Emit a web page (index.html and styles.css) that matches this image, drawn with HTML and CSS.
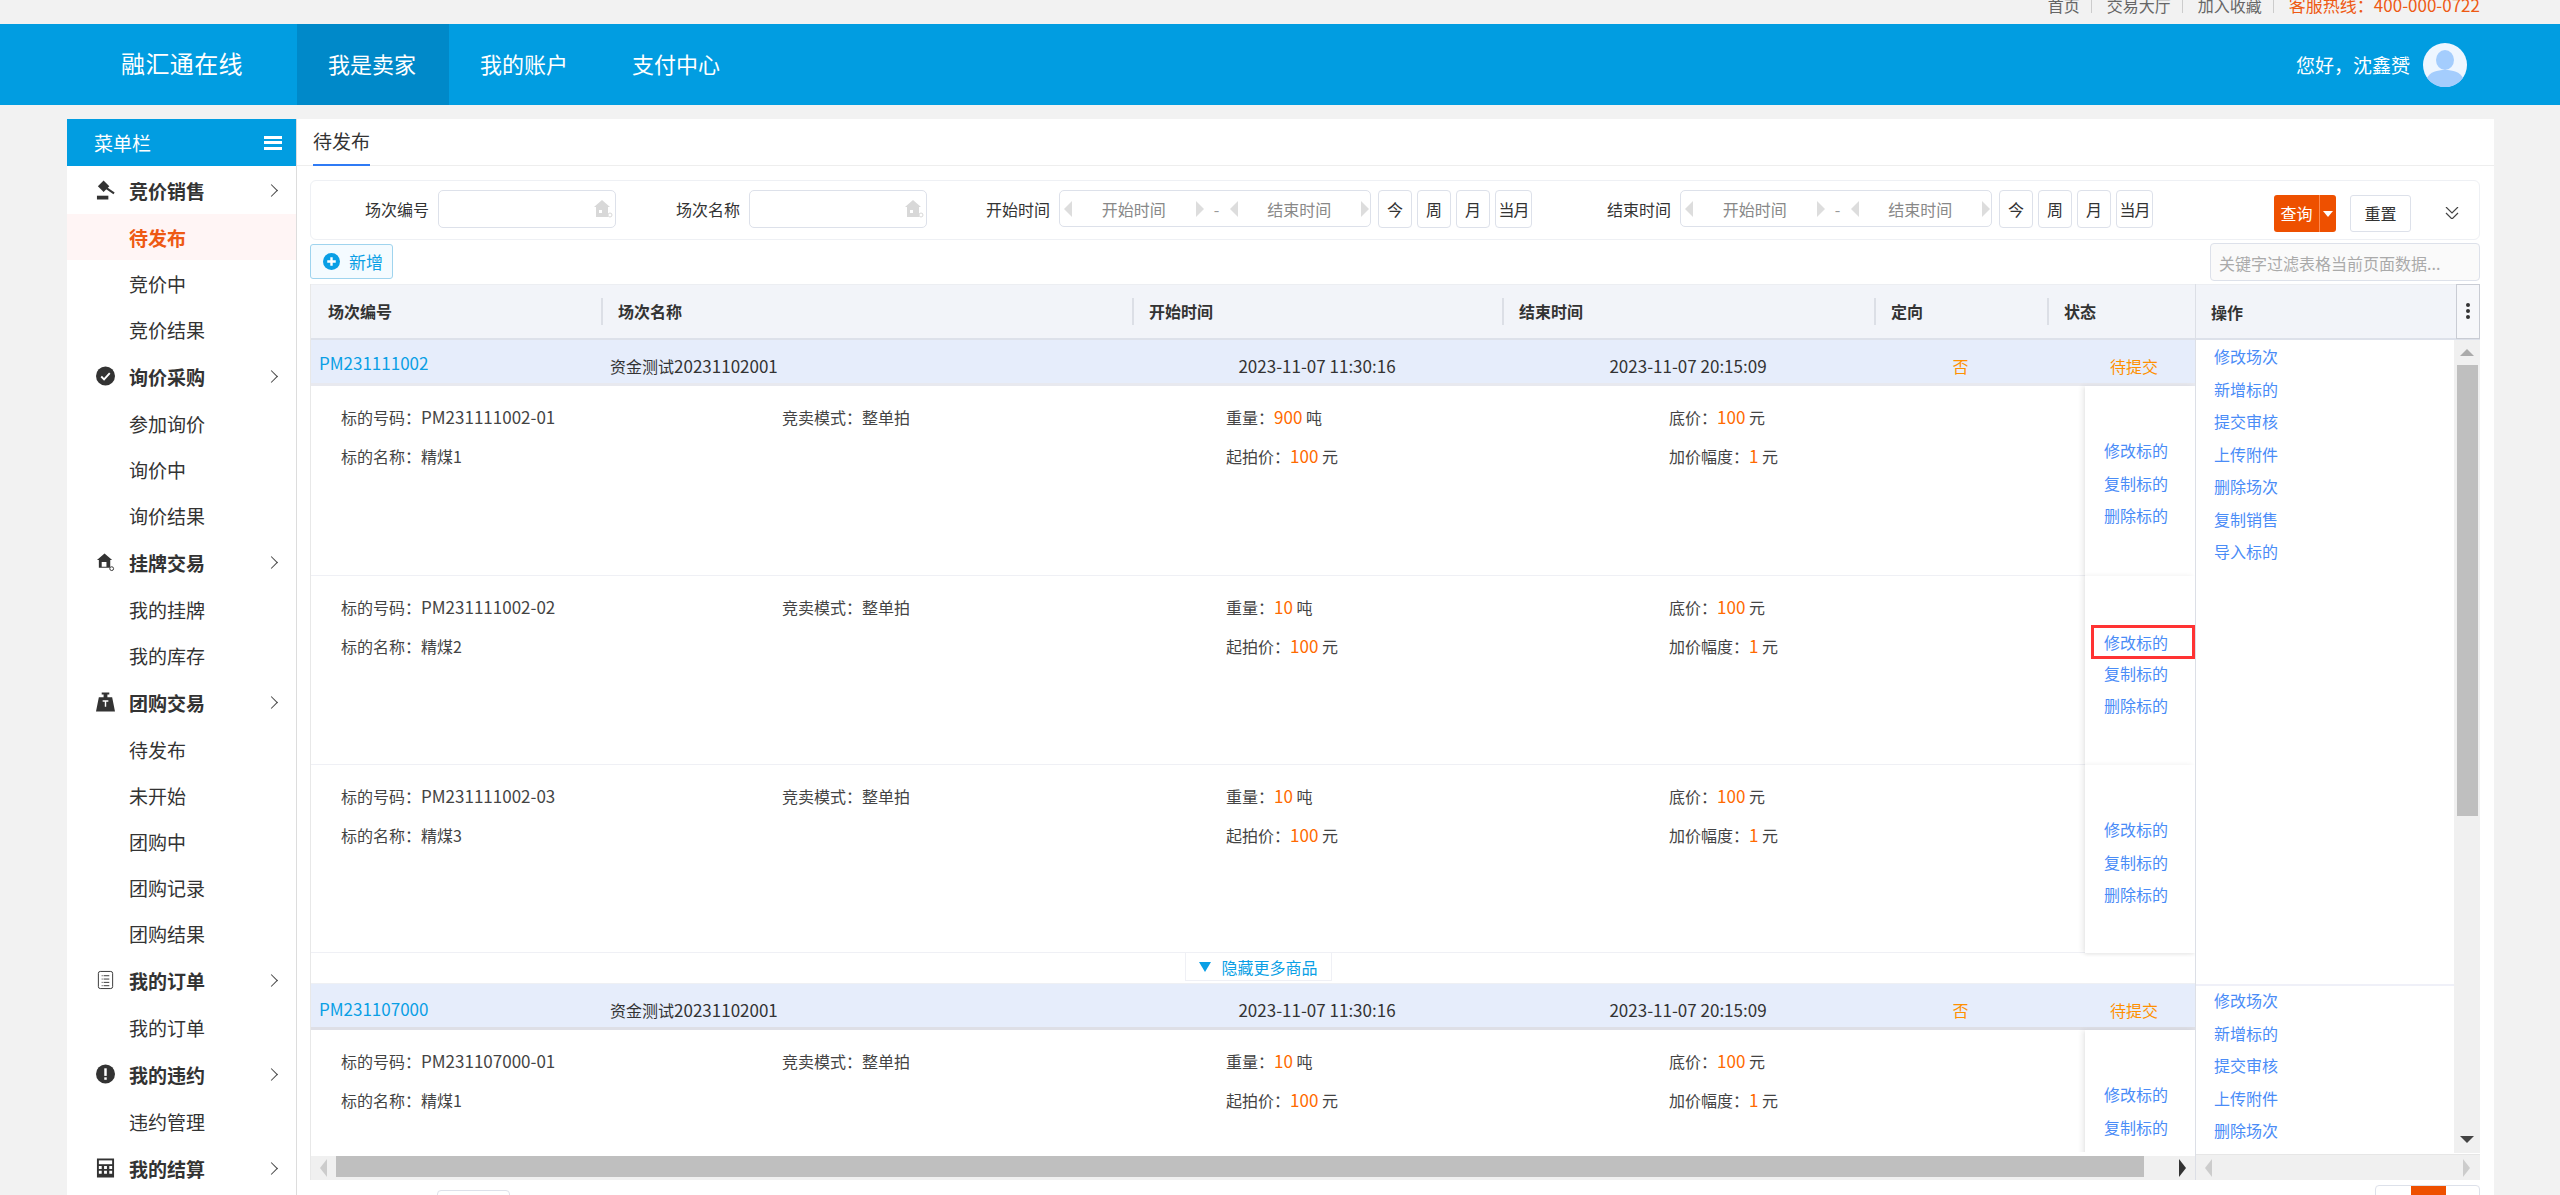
FILE: index.html
```html
<!DOCTYPE html>
<html lang="zh-CN">
<head>
    <meta charset="UTF-8">
    <title>融汇通在线</title>
    <link rel="stylesheet" href="styles.css">
</head>
<body>
    <div class="topbar">
        <a>首页</a><i class="sep"></i>
        <a>交易大厅</a><i class="sep"></i>
        <a>加入收藏</a><i class="sep"></i>
        <a class="hotline">客服热线：400-000-0722</a>
    </div>

    <div class="header">
        <div class="brand">融汇通在线</div>
        <a class="nav-item active">我是卖家</a>
        <a class="nav-item">我的账户</a>
        <a class="nav-item">支付中心</a>
        <div class="user">
            <span>您好，沈鑫赟</span>
            <svg class="avatar" viewBox="0 0 44 44"><circle cx="22" cy="22" r="22" fill="#eef6ff"/><ellipse cx="22" cy="17" rx="9" ry="10" fill="#a4cdfd"/><path d="M4 35c3-6 10-8 18-8s15 2 18 8a22 22 0 0 1-36 0z" fill="#a4cdfd"/></svg>
        </div>
    </div>

    <div class="layout">
        <div class="sidebar">
            <div class="side-title"><span>菜单栏</span><i class="burger"></i></div>

            <a class="menu-head"><svg viewBox="0 0 20 20"><path d="M8 0l6 6-6 6-6-6z" fill="#333"/><path d="M11 8l8 5.500" stroke="#333" stroke-width="2.200"/><rect x="1" y="16" width="12" height="4" fill="#333"/></svg><b>竞价销售</b><i class="arrow"></i></a>
            <a class="menu-item current">待发布</a>
            <a class="menu-item">竞价中</a>
            <a class="menu-item">竞价结果</a>

            <a class="menu-head"><svg viewBox="0 0 20 20"><circle cx="10" cy="10" r="10" fill="#333"/><path d="M5.500 10.500l3 3 6-6.500" fill="none" stroke="#fff" stroke-width="2"/></svg><b>询价采购</b><i class="arrow"></i></a>
            <a class="menu-item">参加询价</a>
            <a class="menu-item">询价中</a>
            <a class="menu-item">询价结果</a>

            <a class="menu-head"><svg viewBox="0 0 20 20"><path d="M9 1l8 7h-2v8H3V8H1z" fill="#333"/><rect x="6" y="10" width="5" height="5" fill="#fff"/><circle cx="16.500" cy="17" r="2" fill="#fff" stroke="#333"/></svg><b>挂牌交易</b><i class="arrow"></i></a>
            <a class="menu-item">我的挂牌</a>
            <a class="menu-item">我的库存</a>

            <a class="menu-head"><svg viewBox="0 0 20 20"><path d="M6 0h8v2h-2v3h5l3 15H0L3 5h5V2H6z" fill="#333"/><path d="M7 9h6M10 9v6" stroke="#fff" stroke-width="1.500"/></svg><b>团购交易</b><i class="arrow"></i></a>
            <a class="menu-item">待发布</a>
            <a class="menu-item">未开始</a>
            <a class="menu-item">团购中</a>
            <a class="menu-item">团购记录</a>
            <a class="menu-item">团购结果</a>

            <a class="menu-head"><svg viewBox="0 0 20 20"><rect x="2.500" y="1" width="15" height="18" rx="2" fill="none" stroke="#333"/><path d="M6 5.500h8M6 9h8M6 12.500h8M6 16h8" stroke="#333" stroke-dasharray="1 1 7"/></svg><b>我的订单</b><i class="arrow"></i></a>
            <a class="menu-item">我的订单</a>

            <a class="menu-head"><svg viewBox="0 0 20 20"><circle cx="10" cy="10" r="10" fill="#333"/><rect x="8.700" y="4" width="2.600" height="8" fill="#fff"/><rect x="8.700" y="13.500" width="2.600" height="2.600" fill="#fff"/></svg><b>我的违约</b><i class="arrow"></i></a>
            <a class="menu-item">违约管理</a>

            <a class="menu-head"><svg viewBox="0 0 20 20"><rect x="1" y="0" width="18" height="20" fill="#333"/><rect x="3" y="2" width="14" height="4" fill="#fff"/><path d="M3 8h3v3H3zM8.500 8h3v3h-3zM14 8h3v3h-3zM3 13h3v3H3zM8.500 13h3v3h-3zM14 13h3v3h-3z" fill="#fff"/></svg><b>我的结算</b><i class="arrow"></i></a>
        </div>

        <div class="content">
            <div class="tabs"><span class="tab">待发布</span></div>

            <div class="filter">
                <label class="f-label l-first">场次编号</label>
                <div class="f-input"><svg class="f-icon" viewBox="0 0 20 18"><path d="M9 0l8 7h-2v10H3V7H1z" fill="#d8d8d8"/><rect x="6" y="10" width="3" height="3" fill="#fff"/><circle cx="17" cy="15" r="2" fill="#fff" stroke="#d8d8d8"/></svg></div>
                <label class="f-label l-second">场次名称</label>
                <div class="f-input"><svg class="f-icon" viewBox="0 0 20 18"><path d="M9 0l8 7h-2v10H3V7H1z" fill="#d8d8d8"/><rect x="6" y="10" width="3" height="3" fill="#fff"/><circle cx="17" cy="15" r="2" fill="#fff" stroke="#d8d8d8"/></svg></div>

                <label class="f-label l-third">开始时间</label>
                <div class="f-range">
                    <i class="tri left"></i><span>开始时间</span><i class="tri right"></i><em>-</em>
                    <i class="tri left"></i><span>结束时间</span><i class="tri right"></i>
                </div>
                <a class="f-btn b-first">今</a><a class="f-btn">周</a><a class="f-btn">月</a><a class="f-btn wide">当月</a>

                <label class="f-label l-fourth">结束时间</label>
                <div class="f-range">
                    <i class="tri left"></i><span>开始时间</span><i class="tri right"></i><em>-</em>
                    <i class="tri left"></i><span>结束时间</span><i class="tri right"></i>
                </div>
                <a class="f-btn b-first">今</a><a class="f-btn">周</a><a class="f-btn">月</a><a class="f-btn wide">当月</a>

                <a class="query"><span>查询</span><i class="query-drop"></i></a>
                <a class="reset">重置</a>
                <svg class="collapse" viewBox="0 0 14 12"><path d="M1 0l6 6 6-6M1 6l6 6 6-6" fill="none" stroke="#444" stroke-width="1.200"/></svg>
            </div>

            <div class="toolbar">
                <a class="add"><svg viewBox="0 0 18 18"><circle cx="9" cy="9" r="9" fill="#0a9fe5"/><path d="M9 4.500v9M4.500 9h9" stroke="#fff" stroke-width="2.500"/></svg>新增</a>
                <div class="keyword">关键字过滤表格当前页面数据...</div>
            </div>

            <div class="grid">
                <div class="grid-main">
                    <div class="thead">
                        <div><span>场次编号</span></div>
                        <div><span>场次名称</span></div>
                        <div><span>开始时间</span></div>
                        <div><span>结束时间</span></div>
                        <div><span>定向</span></div>
                        <div><span>状态</span></div>
                    </div>
                    <div class="tbody" id="tbody"></div>
                    <div class="hbar"><i class="tri left"></i><div class="hthumb"></div><i class="tri right dark"></i></div>
                </div>
                <div class="grid-ops">
                    <div class="ops-head"><span>操作</span><a class="col-menu"><i></i><i></i><i></i></a></div>
                    <div class="ops-body">
                        <div class="ops-list">
                            <div class="ops-group first" id="ops-one"></div>
                            <div class="ops-group" id="ops-two"></div>
                        </div>
                        <div class="vbar"><i class="tri up"></i><div class="vthumb"></div><i class="tri down"></i></div>
                    </div>
                    <div class="ops-bar"><i class="tri left"></i><i class="tri right"></i></div>
                </div>
            </div>

            <div class="pager-row">
                <div class="page-size"></div>
                <div class="pager"><a></a><a class="on"></a><a></a></div>
            </div>
        </div>
    </div>

    <script src="app.js"></script>
</body>
</html>
```

FILE: styles.css
```css
* {
    box-sizing: border-box;
}
html, body {
    margin: 0;
    height: 1195px;
    overflow: hidden;
}
body {
    font-family: "Noto Sans CJK SC", "Liberation Sans", sans-serif;
    font-size: 16px;
    color: #333;
    background: #f2f2f2;
}
i, em {
    font-style: normal;
}
.en {
    font-size: 17px;
}

/* top links */
.topbar {
    height: 24px;
    padding-right: 80px;
    overflow: hidden;
    display: flex;
    justify-content: flex-end;
    align-items: flex-start;
    color: #666;
}
.topbar a {
    margin-top: -5px;
    line-height: 20px;
}
.topbar .sep {
    width: 1px;
    height: 13px;
    margin: 0 15px 0 11px;
    background: #ccc;
}
.hotline {
    color: #ee5a14;
    font-size: 17px;
}

/* header */
.header {
    height: 81px;
    display: flex;
    align-items: stretch;
    background: #019de1;
    color: #fff;
    padding-right: 93px;
}
.brand {
    width: 297px;
    padding-left: 121px;
    font-size: 24px;
    letter-spacing: 0.400px;
    line-height: 78px;
}
.nav-item {
    width: 152px;
    padding-right: 2px;
    text-align: center;
    font-size: 22px;
    line-height: 78px;
}
.nav-item.active {
    background: #0089c9;
}
.user {
    margin-left: auto;
    display: flex;
    align-items: center;
    font-size: 19px;
    gap: 13px;
}
.avatar {
    width: 44px;
    height: 44px;
}

/* page body */
.layout {
    display: flex;
    margin: 14px 66px 0 67px;
}
.sidebar {
    width: 230px;
    height: 1076px;
    background: #fff;
    border-right: 1px solid #ddd;
    overflow: hidden;
}
.side-title {
    height: 47px;
    background: #019de1;
    color: #fff;
    font-size: 19px;
    padding: 0 14px 0 27px;
    display: flex;
    align-items: center;
    justify-content: space-between;
}
.burger {
    width: 18px;
    height: 14px;
    border-top: 3px solid #fff;
    border-bottom: 3px solid #fff;
}
.burger::after {
    content: "";
    display: block;
    height: 3px;
    margin-top: 2.500px;
    background: #fff;
}
.menu-head {
    height: 48px;
    display: flex;
    align-items: center;
    padding-left: 29px;
    font-size: 19px;
}
.menu-head svg {
    width: 19px;
    height: 20px;
    margin-right: 14px;
}
.menu-head b {
    flex: 1;
}
.arrow {
    width: 9px;
    height: 9px;
    margin-right: 20px;
    border-top: 1px solid #444;
    border-right: 1px solid #444;
    transform: rotate(45deg);
}
.menu-item {
    display: block;
    height: 46px;
    padding-left: 62px;
    line-height: 48px;
    font-size: 19px;
}
.menu-item.current {
    background: #fff5f5;
    color: #ee5a14;
    font-weight: bold;
}

.content {
    flex: 1;
    background: #fff;
    height: 1076px;
    overflow: hidden;
}
.tabs {
    height: 47px;
    padding-left: 16px;
    border-bottom: 1px solid #eee;
}
.tab {
    display: inline-block;
    height: 47px;
    line-height: 44px;
    font-size: 19px;
    border-bottom: 2px solid #2f7bf5;
}

/* search form */
.filter {
    margin: 14px 14px 0 13px;
    height: 60px;
    border: 1px solid #eef0f4;
    border-radius: 6px;
    display: flex;
    align-items: flex-start;
    padding-top: 9px;
}
.f-label {
    line-height: 38px;
    white-space: nowrap;
    margin-right: 9px;
}
.l-first { margin-left: 54px; }
.l-second { margin-left: 60px; }
.l-third { margin-left: 59px; }
.l-fourth { margin-left: 75px; }
.f-input {
    width: 178px;
    height: 38px;
    border: 1px solid #dde1ea;
    border-radius: 5px;
    display: flex;
    align-items: center;
    justify-content: flex-end;
    padding-right: 2px;
}
.f-icon {
    width: 20px;
    height: 18px;
}
.f-range {
    width: 312px;
    height: 37px;
    border: 1px solid #dde1ea;
    border-radius: 5px;
    display: flex;
    align-items: center;
    padding: 0 1px 0 4px;
    color: #888;
}
.f-range span {
    flex: 1;
    text-align: center;
}
.f-range em {
    width: 26px;
    text-align: center;
    color: #999;
}
.f-btn {
    width: 34px;
    height: 38px;
    line-height: 36px;
    margin-left: 5px;
    text-align: center;
    border: 1px solid #dde1ea;
    border-radius: 4px;
}
.f-btn.b-first {
    margin-left: 7px;
}
.f-btn.wide {
    width: 37px;
    white-space: nowrap;
    font-size: 16px;
    letter-spacing: -1px;
}
.query {
    margin: 5px 0 0 auto;
    width: 62px;
    height: 37px;
    background: #ee5000;
    border-radius: 3px;
    color: #fff;
    display: flex;
    align-items: center;
}
.query span {
    width: 46px;
    text-align: center;
    border-right: 1px solid #ff8a50;
    line-height: 37px;
}
.query-drop {
    margin-left: 3px;
    border: 5px solid transparent;
    border-top: 6px solid #fff;
    border-bottom: 0;
}
.reset {
    margin: 5px 0 0 14px;
    width: 61px;
    height: 37px;
    line-height: 35px;
    text-align: center;
    border: 1px solid #dde1ea;
    border-radius: 3px;
}
.collapse {
    width: 14px;
    height: 12px;
    margin: 17px 20px 0 34px;
}
.toolbar {
    margin: 4px 14px 0 13px;
    height: 40px;
    display: flex;
    align-items: flex-start;
    justify-content: space-between;
}
.add {
    width: 83px;
    height: 35px;
    border: 1px solid #9fd4ee;
    border-radius: 3px;
    background: #f4fbff;
    color: #0a9fe5;
    font-size: 17px;
    display: flex;
    align-items: center;
    padding-left: 12px;
    gap: 9px;
}
.add svg {
    width: 17px;
    height: 17px;
}
.keyword {
    width: 270px;
    height: 38px;
    margin-top: -1px;
    border: 1px solid #dde1ea;
    border-radius: 4px;
    background: #fafafa;
    color: #aaa;
    line-height: 38px;
    padding-left: 8px;
    font-size: 16px;
}

/* table */
.grid {
    margin: 0 14px 0 13px;
    height: 896px;
    display: flex;
    background: #f0f0f0;
}
.grid-main {
    width: 1885px;
    height: 896px;
    overflow: hidden;
    border-left: 1px solid #e8e8e8;
    background: #fff;
}
.thead {
    height: 56px;
    background: #f2f4f9;
    border-bottom: 2px solid #dde1ea;
    border-top: 1px solid #eceef2;
    margin-left: -1px;
    display: grid;
    grid-template-columns: 291px 531px 370px 372px 173px 148px;
    align-items: center;
    font-weight: bold;
}
.thead div {
    border-left: 2px solid #dcdfe6;
    height: 27px;
    line-height: 27px;
    padding-left: 15px;
}
.thead div:first-child {
    border-left: 0;
    padding-left: 18px;
}
.tbody {
    height: 812px;
    margin-bottom: 2px;
    overflow: hidden;
}
.row-main {
    height: 46px;
    margin-left: -1px;
    background: #e6edfb;
    border-bottom: 3px solid #e8e9ef;
    display: grid;
    grid-template-columns: 291px 531px 370px 372px 173px 148px;
    line-height: 52px;
}
.row-main.later {
    height: 47px;
    border-top: 1px solid #eef0f4;
    border-bottom-color: #dedfe6;
    line-height: 52px;
}
.row-main .code {
    padding-left: 9px;
    color: #0a9fe5;
    font-size: 17px;
    line-height: 46px;
}
.row-main.later .code {
    line-height: 50px;
}
.row-main .name {
    padding-left: 9px;
}
.row-main .mid {
    text-align: center;
    font-size: 17px;
}
.row-main .flag,
.row-main .state {
    color: #ff9000;
}
.row-main .flag {
    text-align: center;
}
.row-main .state {
    padding-left: 63px;
    white-space: nowrap;
}
.row-sub {
    height: 189px;
    border-bottom: 1px solid #eff0f5;
    display: grid;
    grid-template-columns: 441px 444px 443px 415px 111px;
    padding-left: 30px;
}
.row-main + .row-sub {
    height: 190px;
}
.row-sub:nth-child(4) {
    height: 188px;
}
.row-sub .cell {
    padding-top: 20px;
    line-height: 22px;
    color: #444;
}
.row-sub .cell:first-child {
    margin-right: -1px;
}
.row-sub .cell p {
    margin: 0 0 17px;
    white-space: nowrap;
}
.num {
    color: #ff6a00;
    font-size: 17px;
}
.sub-ops {
    margin-left: 1px;
    margin-bottom: -1px;
    padding: 48px 0 0 19px;
    box-shadow: -3px 0 5px rgba(0, 0, 0, 0.07), 0 2px 3px rgba(0, 0, 0, 0.05);
    background: #fff;
    position: relative;
}
.sub-ops a {
    display: block;
    color: #4a8cf7;
    line-height: 32.500px;
    white-space: nowrap;
}
.sub-ops .picked {
    height: 34px;
    line-height: 34px;
    margin: 1px 0 -2.500px -13px;
    padding-left: 13px;
    outline: 3px solid #ff3333;
    outline-offset: -3px;
}
.more {
    height: 30px;
    display: flex;
    justify-content: center;
    padding-left: 11px;
}
.more a {
    width: 147px;
    height: 28px;
    border: 1px solid #eff0f5;
    border-top: 0;
    color: #0a9fe5;
    display: flex;
    align-items: center;
    justify-content: center;
    gap: 10px;
}
.more i {
    border: 6px solid transparent;
    border-top: 10px solid #0a9fe5;
    border-bottom: 0;
}

.hbar {
    height: 26px;
    border-top: 2px solid #fff;
    background: #f0f0f0;
    margin-left: -1px;
    display: flex;
    align-items: flex-start;
    padding-left: 10px;
}
.hbar .tri {
    align-self: center;
}
.hthumb {
    width: 1808px;
    height: 21px;
    margin-left: 9px;
    background: #bfbfbf;
}
.hbar .right {
    margin-left: 35px;
}

/* fixed right column */
.grid-ops {
    width: 285px;
    display: flex;
    flex-direction: column;
    border-left: 1px solid #dcdfe6;
    background: #fff;
}
.ops-head {
    height: 56px;
    background: #f2f4f9;
    border-top: 1px solid #eceef2;
    border-bottom: 2px solid #dde1ea;
    display: flex;
    align-items: center;
    padding-left: 15px;
    font-weight: bold;
}
.ops-head span {
    flex: 1;
}
.col-menu {
    width: 24px;
    height: 55px;
    margin-top: -1px;
    border: 1px solid #c9ccd4;
    display: flex;
    flex-direction: column;
    align-items: center;
    justify-content: center;
    gap: 2px;
    background: #f6f7fa;
}
.col-menu i {
    width: 4px;
    height: 4px;
    background: #333;
    border-radius: 50%;
}
.ops-body {
    flex: 1;
    display: flex;
    min-height: 0;
}
.ops-list {
    flex: 1;
    overflow: hidden;
}
.ops-group {
    padding-left: 18px;
    color: #4a8cf7;
    border-top: 2px solid #eff0f8;
}
.ops-group.first {
    height: 644px;
    border-top: 0;
}
.ops-group a {
    display: block;
    line-height: 32.500px;
}
.ops-group:not(.first) a:first-child {
    margin-top: -2px;
}
.vbar {
    width: 26px;
    background: #f0f0f0;
    padding: 9px 3px 0;
    display: flex;
    flex-direction: column;
    align-items: center;
    height: 813px;
}
.vthumb {
    width: 21px;
    height: 451px;
    margin-top: 9px;
    background: #bfbfbf;
    flex-shrink: 0;
}
.vbar .down {
    margin-top: auto;
    margin-bottom: 10px;
}
.ops-bar {
    height: 26px;
    background: #f0f0f0;
    border-top: 1px solid #e6e6e6;
    display: flex;
    align-items: center;
    justify-content: space-between;
    padding: 0 10px 0 9px;
}

/* little scrollbar and picker triangles */
.tri {
    display: block;
    width: 0;
    height: 0;
    border: 6px solid transparent;
    flex-shrink: 0;
}
.tri.left {
    border-left: 0;
    border-right: 7px solid #ccc;
    border-top-width: 9px;
    border-bottom-width: 9px;
}
.tri.right {
    border-right: 0;
    border-left: 7px solid #ccc;
    border-top-width: 9px;
    border-bottom-width: 9px;
}
.tri.right.dark {
    border-left-color: #333;
}
.tri.up {
    border-top: 0;
    border-bottom: 7px solid #aaa;
    border-left-width: 7px;
    border-right-width: 7px;
}
.tri.down {
    border-bottom: 0;
    border-top: 7px solid #444;
    border-left-width: 7px;
    border-right-width: 7px;
}
.f-range .tri.left,
.f-range .tri.right {
    border-left-width: 8px;
    border-right-width: 8px;
    border-left-color: #ddd;
    border-right-color: #ddd;
    border-top-width: 8px;
    border-bottom-width: 8px;
}
.f-range .tri.left {
    border-left-width: 0;
}
.f-range .tri.right {
    border-right-width: 0;
}

.pager-row {
    display: flex;
    justify-content: space-between;
    margin: 5px 14px 0 140px;
}
.page-size {
    width: 73px;
    height: 20px;
    border: 1px solid #dde1ea;
    border-radius: 4px;
    margin-top: 5px;
}
.pager {
    display: flex;
    width: 105px;
    height: 20px;
    border: 1px solid #dde1ea;
    border-radius: 4px;
}
.pager a {
    width: 35px;
    flex-shrink: 0;
}
.pager .on {
    background: #ee5000;
}
```

FILE: app.js
```js
const lots = [
    { no: "PM231111002", subs: [
        { no: "01", weight: 900, name: "精煤1" },
        { no: "02", weight: 10, name: "精煤2", picked: true },
        { no: "03", weight: 10, name: "精煤3" }
    ] },
    { no: "PM231107000", subs: [
        { no: "01", weight: 10, name: "精煤1" }
    ] }
];

const groupOps = ["修改场次", "新增标的", "提交审核", "上传附件", "删除场次", "复制销售", "导入标的"];

function mainRow(lot, later) {
    return `<div class="row-main ${later ? "later" : ""}">
        <div class="code">${lot.no}</div>
        <div class="name">资金测试<span class="en">20231102001</span></div>
        <div class="mid">2023-11-07 11:30:16</div>
        <div class="mid">2023-11-07 20:15:09</div>
        <div class="flag">否</div>
        <div class="state">待提交</div>
    </div>`;
}

function subRow(lot, sub) {
    return `<div class="row-sub">
        <div class="cell"><p>标的号码：<span class="en">${lot.no}-${sub.no}</span></p><p>标的名称：${sub.name}</p></div>
        <div class="cell"><p>竞卖模式：整单拍</p></div>
        <div class="cell"><p>重量：<span class="num">${sub.weight}</span> 吨</p><p>起拍价：<span class="num">100</span> 元</p></div>
        <div class="cell"><p>底价：<span class="num">100</span> 元</p><p>加价幅度：<span class="num">1</span> 元</p></div>
        <div class="sub-ops">
            <a class="${sub.picked ? "picked" : ""}">修改标的</a>
            <a>复制标的</a>
            <a>删除标的</a>
        </div>
    </div>`;
}

document.getElementById("tbody").innerHTML = lots.map((lot, i) =>
    mainRow(lot, i > 0) +
    lot.subs.map(sub => subRow(lot, sub)).join("") +
    (i === 0 ? `<div class="more"><a><i></i>隐藏更多商品</a></div>` : "")
).join("");

const opLinks = groupOps.map(op => `<a>${op}</a>`).join("");
document.getElementById("ops-one").innerHTML = opLinks;
document.getElementById("ops-two").innerHTML = opLinks;
```
